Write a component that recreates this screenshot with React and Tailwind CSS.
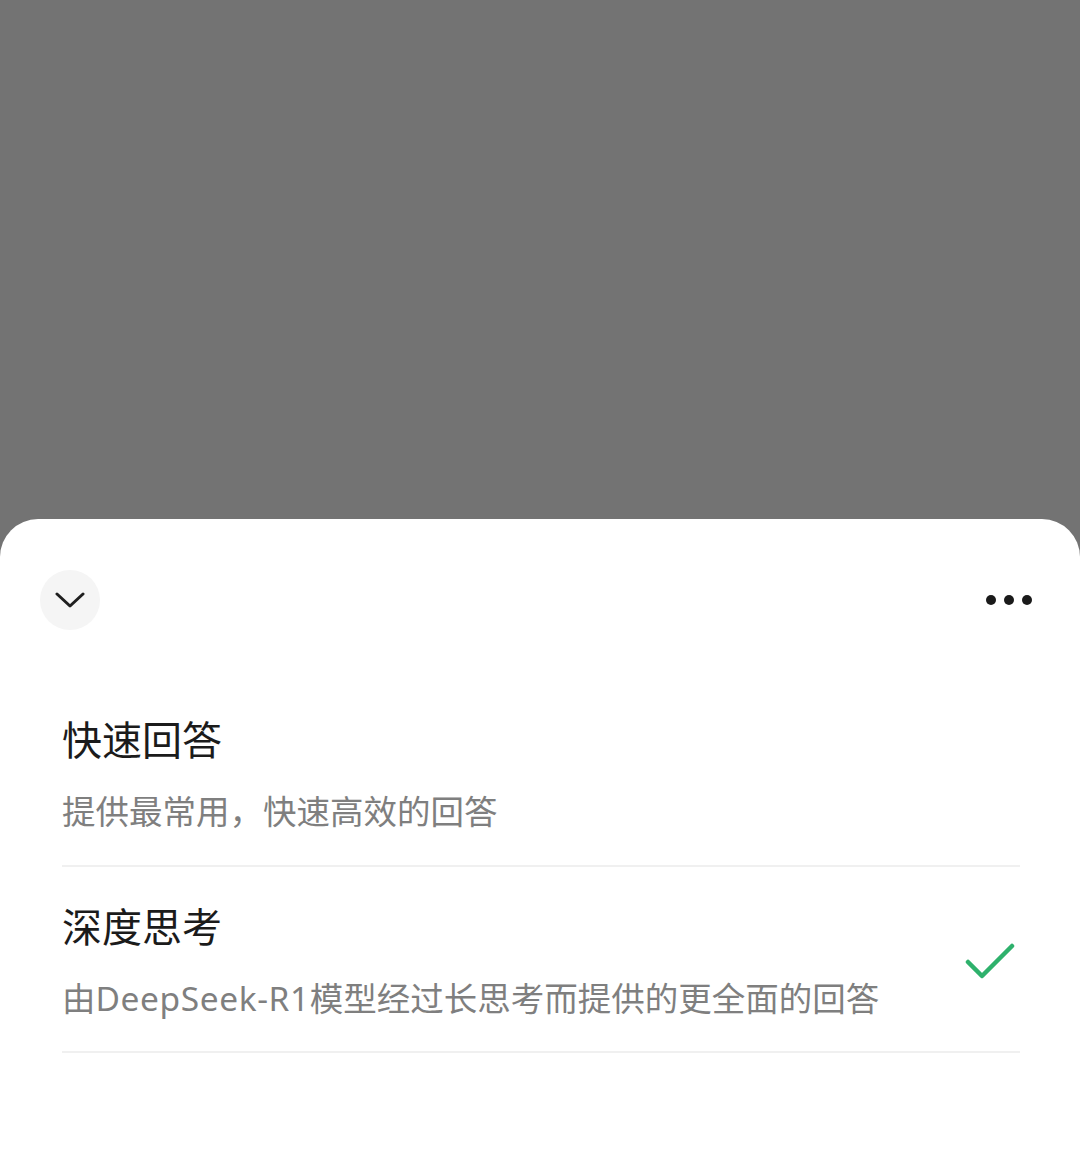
export default function App() {
  return (
    <div
      className="min-h-[1156px] w-full bg-[#737373] flex flex-col"
      style={{ fontFamily: '"Noto Sans", "Noto Sans CJK SC", sans-serif' }}
    >
      <div className="h-[519px] shrink-0" />
      <div className="flex-1 bg-white rounded-t-[38px] flex flex-col">
        <div className="flex items-center justify-between pt-[51px] pl-[40px] pr-[48px]">
          <div className="w-[60px] h-[60px] rounded-full bg-[#f5f5f5] flex items-center justify-center">
            <svg width="30" height="18" viewBox="0 0 30 18" fill="none">
              <path d="M2 3 L15 15 L28 3" stroke="#1f1f1f" strokeWidth="3" strokeLinecap="round" strokeLinejoin="round" />
            </svg>
          </div>
          <div className="flex items-center gap-[8px]">
            <span className="w-[10px] h-[10px] rounded-full bg-[#1a1a1a]" />
            <span className="w-[10px] h-[10px] rounded-full bg-[#1a1a1a]" />
            <span className="w-[10px] h-[10px] rounded-full bg-[#1a1a1a]" />
          </div>
        </div>

        <div className="ml-[62px] mr-[60px] mt-[50px]">
          <div className="flex items-center justify-between pt-[36px] pb-[34px] border-b-2 border-[#f0f0f0]">
            <div>
              <div className="text-[40px] leading-[48px] text-[#1b1b1b]">快速回答</div>
              <div className="mt-[27px] text-[33.5px] leading-[40px] text-[#7f7f7f]">提供最常用，快速高效的回答</div>
            </div>
          </div>
          <div className="flex items-center justify-between pt-[36px] pb-[33px] border-b-2 border-[#f0f0f0]">
            <div>
              <div className="text-[40px] leading-[48px] text-[#1b1b1b]">深度思考</div>
              <div className="mt-[27px] text-[33.5px] leading-[40px] text-[#7f7f7f]">
                由<span className="tracking-[0.6px]">DeepSeek-R1</span>模型经过长思考而提供的更全面的回答
              </div>
            </div>
            <svg width="50" height="38" viewBox="0 0 50 38" fill="none" className="mr-[5px]">
              <path d="M3 20 L17 34 L47 4" stroke="#2eb16c" strokeWidth="4.5" strokeLinecap="round" strokeLinejoin="round" />
            </svg>
          </div>
        </div>
      </div>
    </div>
  );
}
